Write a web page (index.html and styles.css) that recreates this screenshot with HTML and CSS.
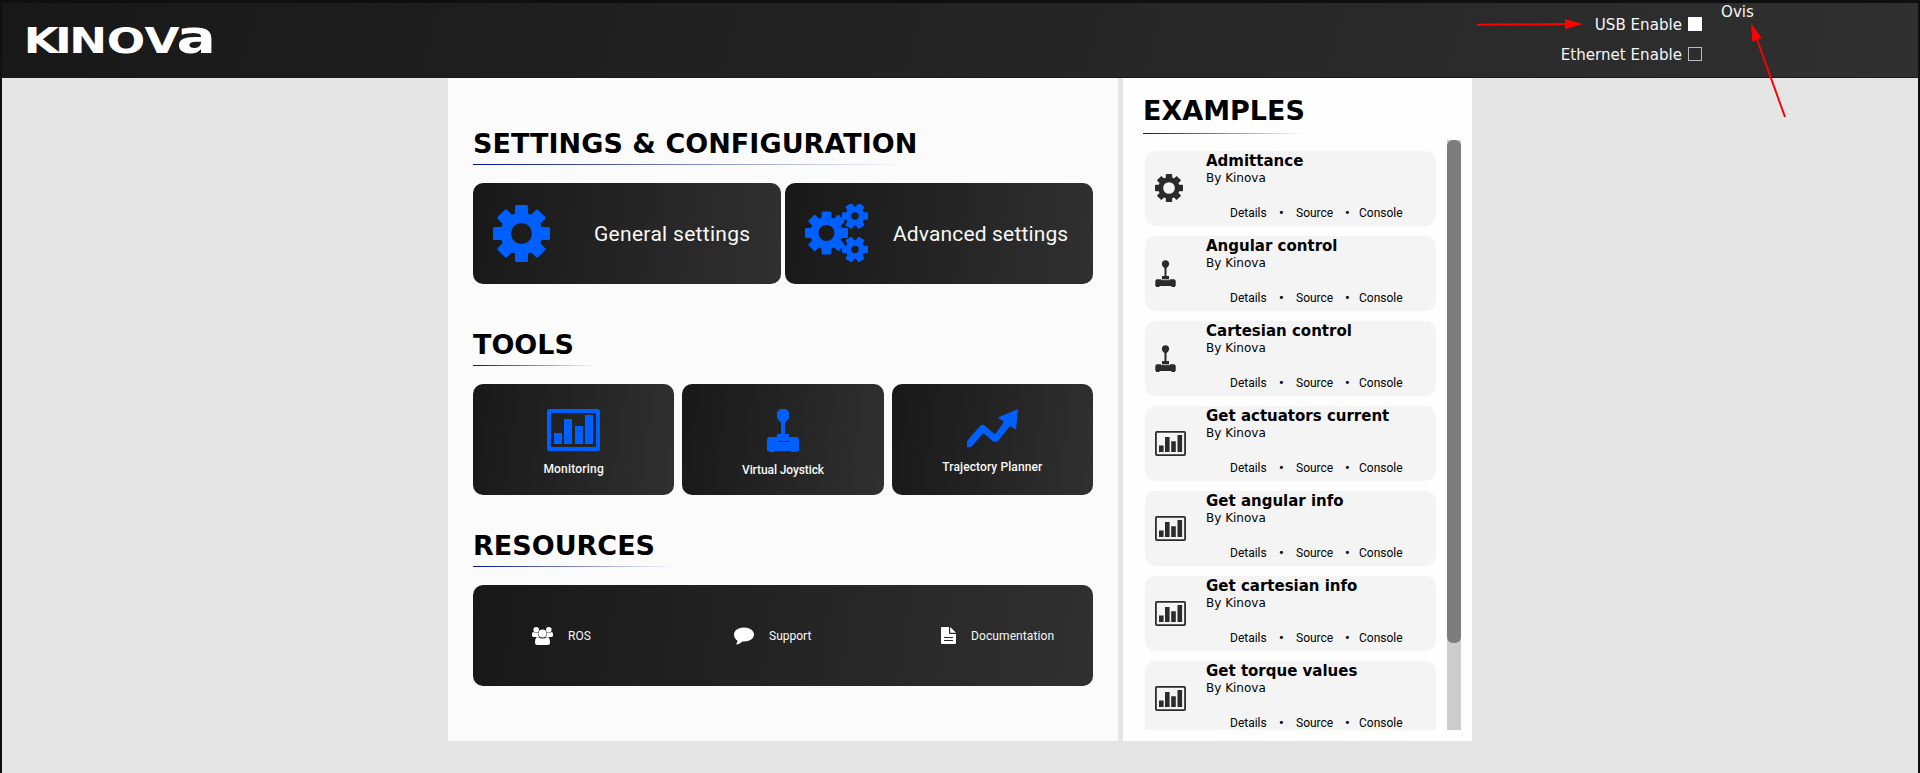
FILE: index.html
```html
<!DOCTYPE html>
<html lang="en">
<head>
<meta charset="utf-8">
<title>Kinova</title>
<link rel="stylesheet" href="styles.css">
</head>
<body>
<svg class="defs" width="0" height="0" aria-hidden="true">
  <symbol id="gear" viewBox="0 0 57 57">
    <circle cx="28.5" cy="28.5" r="15.8" fill="none" stroke="currentColor" stroke-width="10.6"/>
    <g id="teeth" fill="currentColor">
      <rect id="tooth" x="22" y="0" width="13" height="13" rx="1.6"/>
      <use href="#tooth" transform="rotate(45 28.5 28.5)"/>
      <use href="#tooth" transform="rotate(90 28.5 28.5)"/>
      <use href="#tooth" transform="rotate(135 28.5 28.5)"/>
      <use href="#tooth" transform="rotate(180 28.5 28.5)"/>
      <use href="#tooth" transform="rotate(225 28.5 28.5)"/>
      <use href="#tooth" transform="rotate(270 28.5 28.5)"/>
      <use href="#tooth" transform="rotate(315 28.5 28.5)"/>
    </g>
  </symbol>
  <symbol id="gear-thin" viewBox="0 0 57 57">
    <circle cx="28.5" cy="28.5" r="16.8" fill="none" stroke="currentColor" stroke-width="9.8"/>
    <use href="#teeth"/>
  </symbol>
  <symbol id="cog-small" viewBox="0 0 26 26">
    <circle cx="13" cy="13" r="6.6" fill="none" stroke="currentColor" stroke-width="5.8"/>
    <g fill="currentColor">
      <rect id="t6" x="0" y="9.2" width="6.5" height="7.6" rx="1"/>
      <use href="#t6" transform="rotate(60 13 13)"/>
      <use href="#t6" transform="rotate(120 13 13)"/>
      <use href="#t6" transform="rotate(180 13 13)"/>
      <use href="#t6" transform="rotate(240 13 13)"/>
      <use href="#t6" transform="rotate(300 13 13)"/>
    </g>
  </symbol>
  <symbol id="gears" viewBox="0 0 63 58">
    <svg x="0" y="7" width="43" height="44" viewBox="0 0 57 57">
      <circle cx="28.5" cy="28.5" r="16" fill="none" stroke="currentColor" stroke-width="10.8"/>
      <use href="#teeth"/>
    </svg>
    <use href="#cog-small" x="37" y="-1" width="26" height="26"/>
    <use href="#cog-small" x="37" y="32.5" width="26" height="26"/>
  </symbol>
  <symbol id="chart" viewBox="0 0 53 42">
    <rect x="2" y="2" width="49" height="38" rx=".6" fill="none" stroke="currentColor" stroke-width="4" stroke-linejoin="round"/>
    <path fill="currentColor" d="M7 24h8v11H7zM17 10h8v25h-8zM28 17h8v18h-8zM38 6h8v29h-8z"/>
  </symbol>
  <symbol id="chart-thin" viewBox="0 0 31 25">
    <rect x=".9" y=".9" width="29.2" height="23.2" rx="1" fill="none" stroke="currentColor" stroke-width="1.8"/>
    <path fill="currentColor" d="M4 14.5h4.6v6.5H4zM10 6h4.6v15H10zM16.2 10.3h4.6V21h-4.6zM22.5 4h4.6v17h-4.6z"/>
  </symbol>
  <symbol id="joystick" viewBox="0 0 32 43">
    <path fill="currentColor" d="M13 0h6l3 3v6l-4 5v11h4v3h8.500l1.500 2v12h-2v1h-6v-1H8v1H2v-1H0V30l1.500-2H10v-3h4V14l-4-5V3z"/>
    <path class="slit" d="M10 32.500h12"/>
  </symbol>
  <symbol id="joystick-thin" viewBox="0 0 21 27">
    <circle cx="10.500" cy="3.800" r="3.600" fill="currentColor"/>
    <path fill="currentColor" d="M8 6h5l-1.500 2.500V16H14v3.200h5.500l1.200 1.500V26H20v1h-3.500v-1h-12v1H1v-1H.3v-5.300l1.200-1.500H7V16h2.500V8.500z"/>
    <path d="M6.300 17.500v2.200h8.400v-2.200" fill="none" stroke="#f4f4f4" stroke-width=".8"/>
  </symbol>
  <symbol id="trend" viewBox="0 0 51 38">
    <path fill="currentColor" d="M0 32 13.500 16.500q2-1.500 4 0L28 25.500 37 13 31 8.500 51 0l-2 20.500-6-3.500-12 15q-3 1.600-5.500 0L16.500 24 5 37 3.500 38H0z"/>
  </symbol>
</svg>

<div class="app">
  <header class="topbar">
    <svg class="logo" width="200" height="44" viewBox="0 0 200 44" role="img" aria-label="Kinova">
      <text class="logo-text" y="30" transform="scale(1.27 1)"><tspan x="-3.300 21.300 32.500 62 91.700">KINOV</tspan><tspan class="logo-a" x="117">a</tspan></text>
    </svg>
    <div class="switches">
      <label class="switch"><span>USB Enable</span><i class="box on"></i></label>
      <label class="switch"><span>Ethernet Enable</span><i class="box"></i></label>
    </div>
    <span class="robot">Ovis</span>
  </header>

  <main class="content">
    <section class="panel">
      <h1 class="title settings">SETTINGS &amp; CONFIGURATION</h1>
      <div class="row two">
        <a class="card wide"><svg class="gear"><use href="#gear"/></svg><span class="general">General settings</span></a>
        <a class="card wide"><svg class="gears"><use href="#gears"/></svg><span class="advanced">Advanced settings</span></a>
      </div>
      <h1 class="title tools">TOOLS</h1>
      <div class="row three">
        <a class="card tool"><svg class="i-chart"><use href="#chart"/></svg><span class="t-mon">Monitoring</span></a>
        <a class="card tool"><svg class="i-joy"><use href="#joystick"/></svg><span class="t-joy">Virtual Joystick</span></a>
        <a class="card tool"><svg class="i-trend"><use href="#trend"/></svg><span class="t-traj">Trajectory Planner</span></a>
      </div>
      <h1 class="title resources">RESOURCES</h1>
      <div class="card links">
        <a class="link ros"><svg width="21" height="18" viewBox="0 0 21 18"><g fill="#fff"><circle cx="4.200" cy="2.800" r="2.800"/><circle cx="16.800" cy="2.800" r="2.800"/><path d="M0 7q0-2 1.500-2Q4 6.500 6.500 5.500 5.500 8.500 7.500 10H2Q0 10 0 8.500zM21 7q0-2-1.500-2-2.500 1.500-5 .5 1 3-1 4.500H19q2 0 2-1.500z"/><circle cx="10.500" cy="6.500" r="4"/><path d="M3 15.500Q3 10 6 10q4.500 3 9 0 3 0 3 5.500 0 2.500-2.500 2.500h-10Q3 18 3 15.500z"/></g></svg><span>ROS</span></a>
        <a class="link support"><svg width="20" height="18" viewBox="0 0 20 18"><path fill="#fff" d="M10 .5c5.600 0 10 3 10 7s-4.400 7-10 7H8.500Q5.500 17.500 1.500 17.500q2-1.600 2-3.800C1.300 12.400 0 10.200 0 7.500c0-4 4.400-7 10-7z"/></svg><span>Support</span></a>
        <a class="link docs"><svg width="15" height="17" viewBox="0 0 15 17"><path fill="#fff" d="M1 0h7v6q0 1 1 1h6v9q0 1-1 1H1q-1 0-1-1V1q0-1 1-1zM9.200 0 15 5.800H9.200z"/><path d="M3 10.500h9M3 13.500h9" stroke="#282828" stroke-width="1"/></svg><span>Documentation</span></a>
      </div>
    </section>

    <aside class="side">
      <h1 class="title examples">EXAMPLES</h1>
      <div class="scroll">
        <div class="list">
          <article class="item"><svg class="s-gear"><use href="#gear-thin"/></svg><div><h2>Admittance</h2><p>By Kinova</p><nav><a>Details</a><b>•</b><a>Source</a><b>•</b><a>Console</a></nav></div></article>
          <article class="item"><svg class="s-joy"><use href="#joystick-thin"/></svg><div><h2>Angular control</h2><p>By Kinova</p><nav><a>Details</a><b>•</b><a>Source</a><b>•</b><a>Console</a></nav></div></article>
          <article class="item"><svg class="s-joy"><use href="#joystick-thin"/></svg><div><h2>Cartesian control</h2><p>By Kinova</p><nav><a>Details</a><b>•</b><a>Source</a><b>•</b><a>Console</a></nav></div></article>
          <article class="item"><svg class="s-chart"><use href="#chart-thin"/></svg><div><h2>Get actuators current</h2><p>By Kinova</p><nav><a>Details</a><b>•</b><a>Source</a><b>•</b><a>Console</a></nav></div></article>
          <article class="item"><svg class="s-chart"><use href="#chart-thin"/></svg><div><h2>Get angular info</h2><p>By Kinova</p><nav><a>Details</a><b>•</b><a>Source</a><b>•</b><a>Console</a></nav></div></article>
          <article class="item"><svg class="s-chart"><use href="#chart-thin"/></svg><div><h2>Get cartesian info</h2><p>By Kinova</p><nav><a>Details</a><b>•</b><a>Source</a><b>•</b><a>Console</a></nav></div></article>
          <article class="item"><svg class="s-chart"><use href="#chart-thin"/></svg><div><h2>Get torque values</h2><p>By Kinova</p><nav><a>Details</a><b>•</b><a>Source</a><b>•</b><a>Console</a></nav></div></article>
        </div>
        <div class="track"><div class="thumb"></div></div>
      </div>
    </aside>
  </main>
</div>

<svg class="notes" width="320" height="110" viewBox="1470 10 320 110" aria-hidden="true">
  <g stroke="#f00" stroke-width="2"><path d="M1477 24.800 1567 24"/><path d="M1785 117 1756.500 38"/></g>
  <g fill="#f00"><path d="M1583 24 1565 19v10.200z"/><path d="M1751 23l1.300 18.500 9.400-3.500z"/></g>
</svg>
</body>
</html>
```
FILE: styles.css
```css
* { box-sizing: border-box; }
body { margin: 0; font-family: "DejaVu Sans", sans-serif; color: #000; }
h1, h2, p { margin: 0; }
svg { display: block; flex: none; }
.defs { position: absolute; }

.app {
  height: 773px;
  overflow: hidden;
  background: #e5e5e5;
  border: solid #0f0f0f;
  border-width: 3px 2px 0;
}

.topbar {
  display: flex;
  height: 75px;
  padding-left: 26px;
  background: linear-gradient(105deg, #181818, #303030);
  border-bottom: 1px solid #1a1a1a;
  color: #f6f6f6;
  font-size: 15.1px;
}
.logo { margin-top: 20px; overflow: visible; }
.logo-text { font: bold 35.600px "DejaVu Sans", sans-serif; fill: #fff; }
.logo-a { font-size: 46px; }
.switches { width: 1474px; display: flex; flex-direction: column; align-items: flex-end; padding-top: 6px; }
.switch { display: flex; align-items: center; gap: 6px; height: 30px; white-space: nowrap; }
.switch span { padding-top: 2px; }
.box { width: 14px; height: 14px; border: 1px solid #bbb; }
.box.on { background: #fff; border-color: #fff; }
.robot { margin-left: 19px; line-height: 18px; }

.content { display: flex; gap: 5px; width: 1024px; margin-left: 446px; }
.panel { width: 670px; height: 663px; padding: 50px 25px 0; background: #fbfbfb; }
.side { width: 349px; height: 663px; padding: 17px 11px 0 20px; background: #fefefe; }

.title {
  font-size: 27px;
  line-height: 32px;
  height: 37px;
  margin-bottom: 18px;
  white-space: nowrap;
  background: no-repeat left bottom / var(--line) 1px linear-gradient(90deg, #00128b, #00128b00);
}
.settings { --line: 430px; letter-spacing: .04px; }
.tools { --line: 122px; margin-top: 45px; }
.resources { --line: 202px; margin-top: 35px; }
.examples { --line: 161px; height: 39px; margin-bottom: 6px; }

.row { display: grid; }
.two { grid-template-columns: 1fr 1fr; gap: 4px; }
.three { grid-template-columns: 1fr 1fr 1fr; gap: 8px; }
.card {
  border-radius: 10px;
  background: linear-gradient(98deg, #181818, #303030);
  color: #f8f8f8;
  font-family: Roboto, sans-serif;
  white-space: nowrap;
}
.wide { display: flex; align-items: center; height: 101px; padding-left: 20px; font-size: 21px; }
.gear, .gears, .i-chart, .i-joy, .i-trend { color: #0060ff; }
.gear { width: 57px; height: 57px; }
.gears { width: 63px; height: 58px; margin-bottom: 2px; overflow: visible; }
.general { margin-left: 44px; letter-spacing: .3px; }
.advanced { margin-left: 25px; letter-spacing: .15px; }

.tool { display: flex; flex-direction: column; align-items: center; height: 111px; padding-top: 25px; font-size: 12px; font-weight: 500; line-height: 16px; }
.i-chart { width: 53px; height: 42px; margin-bottom: 10px; }
.i-joy { width: 32px; height: 43px; margin-bottom: 10px; }
.i-trend { width: 51px; height: 38px; margin-bottom: 12px; }
.t-mon { letter-spacing: .2px; }
.t-joy { letter-spacing: -.1px; }
.t-traj { letter-spacing: .1px; }
.slit { stroke: #1d2f55; stroke-width: 1; }

.links { display: grid; grid-template-columns: 202px 207px 1fr; align-items: center; height: 101px; padding-left: 59px; font-size: 12px; }
.link { display: flex; align-items: center; gap: 15px; }
.docs { letter-spacing: .1px; }

.scroll { display: flex; justify-content: space-between; height: 590px; overflow: hidden; padding-left: 2px; }
.list { width: 291px; padding-top: 11px; }
.item { display: flex; align-items: center; height: 75px; margin-bottom: 10px; padding-left: 10px; background: #f4f4f4; border-radius: 10px; color: #2b2b2b; }
.item div { width: 220px; height: 75px; margin-left: auto; margin-right: 10px; color: #000; }
.item h2 { font-size: 15px; line-height: 20px; white-space: nowrap; }
.item p { font-size: 12px; line-height: 15px; }
.item nav { display: grid; grid-template-columns: 49px 17px 49px 14px auto; margin: 17px 0 0 24px; font: 12px/20px Roboto, sans-serif; }
.item b { font-size: 13px; line-height: 19px; }
.s-gear { width: 28px; height: 28px; margin-bottom: 2px; }
.s-joy { width: 21px; height: 27px; }
.s-chart { width: 31px; height: 25px; }
.track { width: 14px; height: 590px; background: #ccc; }
.thumb { width: 14px; height: 503px; background: #7d7d7d; border-radius: 6px; }

.notes { position: absolute; left: 1470px; top: 10px; }
```
